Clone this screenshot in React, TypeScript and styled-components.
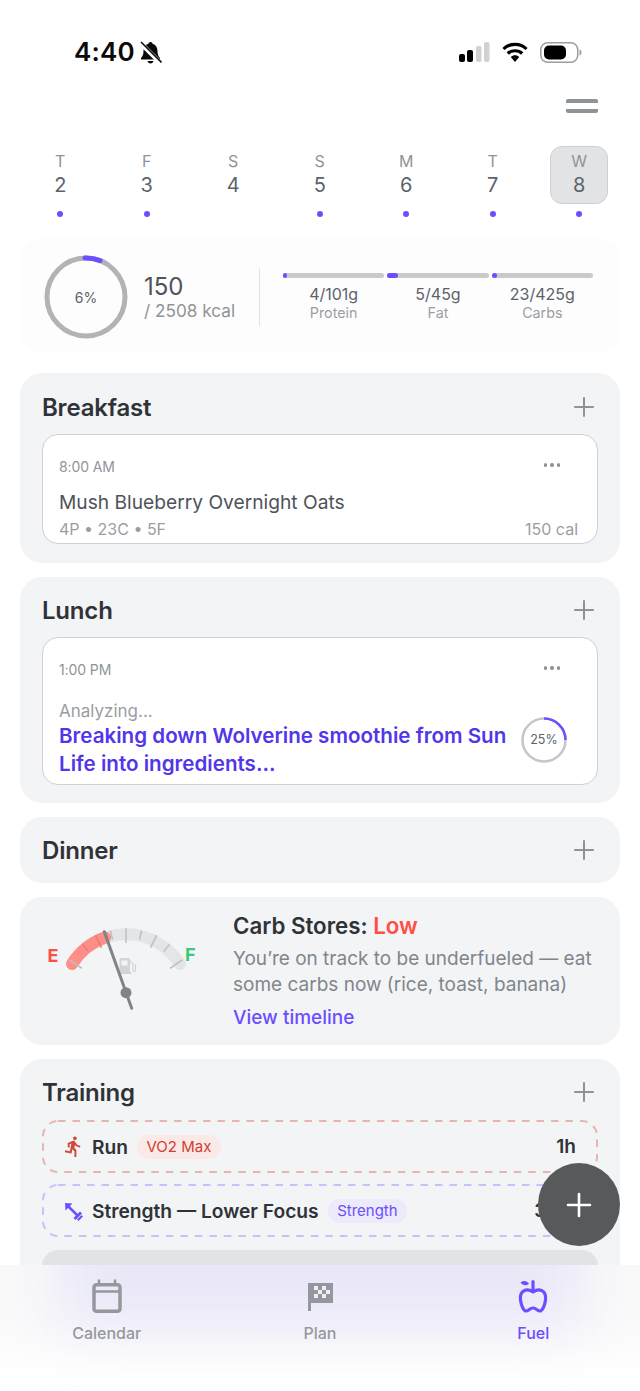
import React from "react";
import styled, { createGlobalStyle } from "styled-components";
import { MdDirectionsRun } from "react-icons/md";

const Global = createGlobalStyle`
  html, body { margin: 0; padding: 0; background: #fff; }
  body { font-family: Inter, "Liberation Sans", sans-serif; -webkit-font-smoothing: antialiased; }
  * { box-sizing: border-box; }
`;

const Screen = styled.div`
  position: relative;
  width: 640px;
  height: 1391px;
  overflow: hidden;
  background: #fff;
`;
const StatusBar = styled.div`
  height: 90px;
  padding: 34px 57px 0 74px;
  display: flex;
  justify-content: space-between;
  align-items: flex-start;
`;
const Clock = styled.div`
  display: flex;
  align-items: center;
  gap: 4px;
  font-size: 26px;
  line-height: 36px;
  font-weight: 600;
  color: #0a0a0a;
  letter-spacing: 0.2px;
`;
const StatusIcons = styled.div`
  display: flex;
  align-items: center;
  gap: 12px;
  height: 36px;
`;
const MenuRow = styled.div`
  height: 30px;
  padding: 9px 42px 0 0;
  display: flex;
  justify-content: flex-end;
`;
const MenuButton = styled.div`
  width: 32px;
  height: 14px;
  border-top: 4px solid #8e9397;
  border-bottom: 4px solid #8e9397;
  border-radius: 2px;
`;
const Week = styled.div`
  margin-top: 26px;
  padding-left: 17px;
  display: flex;
`;
const Day = styled.div`
  width: 86.5px;
  flex: none;
  display: flex;
  flex-direction: column;
  align-items: center;
`;
const DayBox = styled.div<{ $active?: boolean }>`
  width: 58px;
  height: 58px;
  display: flex;
  flex-direction: column;
  align-items: center;
  padding-top: 5px;
  border-radius: 12px;
  background: ${(p) => (p.$active ? "#e2e3e5" : "transparent")};
  border: 1px solid ${(p) => (p.$active ? "#ced0d3" : "transparent")};
`;
const DayLetter = styled.div`
  font-size: 16px;
  line-height: 18px;
  color: #8f9498;
`;
const DayNumber = styled.div`
  margin-top: 2px;
  font-size: 20px;
  line-height: 26px;
  color: #5c636a;
`;
const Dot = styled.div<{ $off?: boolean }>`
  margin-top: 7px;
  width: 6px;
  height: 6px;
  border-radius: 50%;
  background: ${(p) => (p.$off ? "transparent" : "#6b4eff")};
`;
const Stack = styled.div`
  margin-top: 21px;
  padding: 0 20px;
  display: flex;
  flex-direction: column;
  gap: 14px;
`;
const SummaryCard = styled.div`
  height: 114px;
  margin-bottom: 7px;
  border-radius: 20px;
  background: #fdfdfe;
  padding: 0 27px 0 24px;
  display: flex;
  align-items: center;
`;
const Ring = styled.div`
  position: relative;
  width: 84px;
  height: 84px;
  margin-top: 4px;
  flex: none;
  display: flex;
  align-items: center;
  justify-content: center;
  font-size: 14px;
  color: #5c636a;
`;
const RingSvg = styled.svg`
  position: absolute;
  inset: 0;
`;
const Kcal = styled.div`
  margin-left: 16px;
  margin-top: 8px;
  width: 115px;
  flex: none;
`;
const KcalValue = styled.div`
  font-size: 24px;
  line-height: 24px;
  color: #4d535a;
`;
const KcalGoal = styled.div`
  font-size: 17.2px;
  line-height: 24px;
  color: #8f9498;
  white-space: nowrap;
`;
const Divider = styled.div`
  width: 1px;
  height: 58px;
  margin-top: 3px;
  background: #e2e3e5;
  flex: none;
`;
const Macros = styled.div`
  flex: 1;
  margin-left: 23px;
  margin-top: 4px;
  display: grid;
  grid-template-columns: repeat(3, 1fr);
  gap: 3px;
`;
const Macro = styled.div`
  display: flex;
  flex-direction: column;
  align-items: center;
  min-width: 0;
`;
const Track = styled.div`
  position: relative;
  align-self: stretch;
  height: 5px;
  border-radius: 3px;
  background: #c9cacc;
  margin-bottom: 6px;
`;
const Fill = styled.div`
  position: absolute;
  left: 0;
  top: 0;
  bottom: 0;
  border-radius: 3px;
  background: #6b4eff;
`;
const MacroValue = styled.div`
  font-size: 16px;
  line-height: 20px;
  color: #5c636a;
  white-space: nowrap;
`;
const MacroLabel = styled.div`
  font-size: 14.3px;
  line-height: 18px;
  color: #9a9ea3;
`;
const Panel = styled.div<{ $h: number }>`
  height: ${(p) => p.$h}px;
  flex: none;
  border-radius: 22px;
  background: #f3f4f6;
  padding: 0 22px;
`;
const PanelHeader = styled.div<{ $h?: number; $pad?: number }>`
  height: ${(p) => p.$h ?? 61}px;
  padding-top: ${(p) => p.$pad ?? 5}px;
  display: flex;
  align-items: center;
  justify-content: space-between;
`;
const PanelTitle = styled.div`
  font-size: 24px;
  font-weight: 600;
  color: #2f3337;
  letter-spacing: -0.2px;
`;
const AddIcon = styled.svg`
  width: 20px;
  height: 20px;
  margin-right: 4px;
  stroke: #8e9397;
  stroke-width: 2;
  stroke-linecap: round;
  fill: none;
`;
const MealCard = styled.div<{ $h: number }>`
  height: ${(p) => p.$h}px;
  background: #fff;
  border: 1px solid #cfd1d4;
  border-radius: 16px;
  padding: 0 19px 0 16px;
  overflow: hidden;
`;
const MealTop = styled.div`
  height: 62px;
  display: flex;
  align-items: center;
  justify-content: space-between;
  padding-right: 18px;
`;
const MealTime = styled.div`
  font-size: 14px;
  color: #8f9498;
  letter-spacing: -0.1px;
`;
const More = styled.div`
  display: flex;
  gap: 3px;
  margin-top: -2px;
`;
const MoreDot = styled.span`
  width: 3.5px;
  height: 3.5px;
  border-radius: 50%;
  background: #8e9397;
`;
const MealName = styled.div`
  margin-top: -8px;
  font-size: 19.2px;
  line-height: 26px;
  color: #4d535a;
`;
const MealFoot = styled.div`
  margin-top: 3px;
  display: flex;
  justify-content: space-between;
  font-size: 16px;
  line-height: 22px;
  color: #9a9ea3;
`;
const AnalyzeRow = styled.div`
  display: flex;
  align-items: center;
  justify-content: space-between;
  padding-right: 11px;
`;
const AnalyzeLabel = styled.div`
  margin-top: -1px;
  font-size: 17px;
  line-height: 24px;
  color: #9a9ea3;
`;
const AnalyzeText = styled.div`
  width: 462px;
  font-size: 20.6px;
  line-height: 28px;
  font-weight: 600;
  color: #5236ea;
  margin-top: -1px;
`;
const MiniRing = styled.div`
  position: relative;
  width: 46px;
  height: 46px;
  margin-top: -22px;
  flex: none;
  display: flex;
  align-items: center;
  justify-content: center;
  font-size: 12.5px;
  color: #5c636a;
`;
const CarbCard = styled.div`
  height: 148px;
  border-radius: 22px;
  background: #f3f4f6;
  padding: 0 22px 0 24px;
  display: flex;
  align-items: center;
`;
const Gauge = styled.svg`
  width: 160px;
  height: 100px;
  flex: none;
  margin-right: 29px;
  margin-top: -1px;
`;
const CarbTitle = styled.div`
  font-size: 22.3px;
  line-height: 30px;
  font-weight: 600;
  color: #2f3337;
`;
const Low = styled.span`
  color: #ff4f45;
`;
const CarbText = styled.div`
  margin-top: 5px;
  font-size: 19px;
  line-height: 26px;
  color: #80868b;
  white-space: nowrap;
`;
const CarbLink = styled.div`
  margin-top: 7px;
  font-size: 19px;
  line-height: 26px;
  font-weight: 500;
  color: #6b4eff;
`;
const TrainingRow = styled.div`
  position: relative;
  height: 53px;
  margin-bottom: 11px;
  display: flex;
  align-items: center;
  padding: 0 22px 0 20px;
`;
const DashFrame = styled.svg`
  position: absolute;
  left: 0;
  top: 0;
`;
const TrainingIcon = styled.div<{ $color: string }>`
  width: 24px;
  height: 20px;
  margin-left: -1px;
  display: flex;
  align-items: center;
  justify-content: center;
  color: ${(p) => p.$color};
  flex: none;
  margin-right: 7px;
`;
const TrainingName = styled.div`
  font-size: 19.2px;
  font-weight: 600;
  color: #2f3337;
`;
const Tag = styled.div<{ $bg: string; $fg: string }>`
  margin-left: 9px;
  height: 24px;
  padding: 0 9.5px;
  border-radius: 12px;
  display: flex;
  align-items: center;
  background: ${(p) => p.$bg};
  color: ${(p) => p.$fg};
  font-size: 15px;
`;
const Duration = styled.div`
  margin-left: auto;
  font-size: 19px;
  font-weight: 600;
  color: #2f3337;
`;
const GreyBlock = styled.div`
  height: 80px;
  margin-top: 13px;
  border-radius: 16px;
  background: #e2e3e5;
`;
const Fab = styled.div`
  position: absolute;
  left: 538px;
  top: 1163px;
  width: 82px;
  height: 83px;
  border-radius: 50%;
  background: #58595b;
  display: flex;
  align-items: center;
  justify-content: center;
`;
const FabIcon = styled.svg`
  width: 26px;
  height: 26px;
  stroke: #fff;
  stroke-width: 2.6;
  stroke-linecap: round;
`;
const TabBar = styled.div`
  position: absolute;
  left: 0;
  right: 0;
  top: 1265px;
  bottom: 0;
  overflow: hidden;
  display: grid;
  grid-template-columns: repeat(3, 1fr);
  background: linear-gradient(to bottom, #f9f9fa 0%, #fafafb 45%, #ffffff 90%);
  &::before {
    content: "";
    position: absolute;
    left: 60px;
    right: 60px;
    top: -50px;
    height: 115px;
    background: #e9e7f8;
    filter: blur(28px);
  }
`;
const Tab = styled.div<{ $active?: boolean }>`
  position: relative;
  display: flex;
  flex-direction: column;
  align-items: center;
  padding-top: 14px;
  color: ${(p) => (p.$active ? "#6b4eff" : "#94989c")};
`;
const TabIcon = styled.svg`
  width: 38px;
  height: 38px;
`;
const TabLabel = styled.div`
  margin-top: 6px;
  font-size: 16px;
  line-height: 20px;
  font-weight: 500;
`;

const days = [
  ["T", "2", true], ["F", "3", true], ["S", "4", false], ["S", "5", true],
  ["M", "6", true], ["T", "7", true], ["W", "8", true],
] as const;

const Plus = () => (
  <AddIcon viewBox="0 0 20 20">
    <path d="M10 1v18M1 10h18" />
  </AddIcon>
);
const Dots = () => (
  <More>
    <MoreDot />
    <MoreDot />
    <MoreDot />
  </More>
);
const Dash = ({ color }: { color: string }) => (
  <DashFrame width="556" height="53" viewBox="0 0 556 53" fill="none">
    <rect x="1" y="1" width="554" height="51" rx="15" stroke={color} strokeWidth="2" strokeDasharray="7.5 7" />
  </DashFrame>
);

const CX = 82;
const CY = 77;
const polar = (r: number, deg: number) => {
  const a = (deg * Math.PI) / 180;
  return [CX + r * Math.sin(a), CY - r * Math.cos(a)];
};
const ticks: [number, number, number][] = [
  [-56, 53, 68], [-39, 60, 69], [-26, 56, 70], [-13, 60, 69], [0, 55, 70],
  [13, 60, 69], [26, 56, 70], [39, 60, 69], [56, 53, 68],
];

export default function App() {
  return (
    <Screen>
      <Global />
      <StatusBar>
        <Clock>
          4:40
          <svg width="23" height="23" viewBox="0 0 23 23">
            <path d="M11.500 1c1.200 0 2 .8 2 1.800 3.500 1 5 4 5 7.700 0 3 1 5 2.500 6.500v1.500H2V17c1.500-1.500 2.500-3.500 2.500-6.500 0-3.700 1.500-6.700 5-7.700 0-1 .8-1.800 2-1.800z" fill="#0a0a0a" />
            <path d="M8.500 20h6c-.3 1.500-1.500 2.500-3 2.500s-2.700-1-3-2.500z" fill="#0a0a0a" />
            <path d="M1 1.500L21.500 22" stroke="#fff" strokeWidth="4.500" />
            <path d="M2 1L22.500 21.500" stroke="#0a0a0a" strokeWidth="1.600" />
          </svg>
        </Clock>
        <StatusIcons>
          <svg width="31" height="20" viewBox="0 0 31 20">
            <rect x="0" y="12" width="6" height="8" rx="2" fill="#000" />
            <rect x="8" y="8" width="6" height="12" rx="2" fill="#000" />
            <rect x="17" y="4" width="5.500" height="16" rx="2" fill="#cfd1d3" />
            <rect x="25" y="0" width="5.500" height="20" rx="2" fill="#cfd1d3" />
          </svg>
          <svg width="26" height="20" viewBox="0 0 26 20">
            <path d="M1.500 7C7.500 0.800 18.500 0.800 24.500 7" fill="none" stroke="#000" strokeWidth="3.200" />
            <path d="M5.800 11.500C9.500 7.800 16.500 7.800 20.200 11.500" fill="none" stroke="#000" strokeWidth="3.200" />
            <path d="M8.800 15c2.500-2.200 5.900-2.200 8.400 0L13 20z" fill="#000" />
          </svg>
          <svg width="43" height="21" viewBox="0 0 43 21">
            <rect x="0.750" y="0.750" width="37" height="19.500" rx="7" fill="none" stroke="#9a9ea3" strokeWidth="1.500" />
            <rect x="4" y="3.500" width="22" height="14" rx="5" fill="#000" />
            <path d="M39.500 7.500c1.500.5 2 1.800 2 3s-.5 2.500-2 3z" fill="#9a9ea3" />
          </svg>
        </StatusIcons>
      </StatusBar>
      <MenuRow>
        <MenuButton />
      </MenuRow>
      <Week>
        {days.map(([l, n, dot], i) => (
          <Day key={i}>
            <DayBox $active={i === 6}>
              <DayLetter>{l}</DayLetter>
              <DayNumber>{n}</DayNumber>
            </DayBox>
            <Dot $off={!dot} />
          </Day>
        ))}
      </Week>
      <Stack>
        <SummaryCard>
          <Ring>
            <RingSvg width="84" height="84" viewBox="0 0 84 84">
              <circle cx="42" cy="42" r="39" fill="none" stroke="#b1b3b5" strokeWidth="5" />
              <path d="M41 3A39 39 0 0 1 56 5.600" fill="none" stroke="#6b4eff" strokeWidth="5" strokeLinecap="round" />
            </RingSvg>
            6%
          </Ring>
          <Kcal>
            <KcalValue>150</KcalValue>
            <KcalGoal>/ 2508 kcal</KcalGoal>
          </Kcal>
          <Divider />
          <Macros>
            {[
              ["4/101g", "Protein", 4],
              ["5/45g", "Fat", 11],
              ["23/425g", "Carbs", 5],
            ].map(([v, l, w]) => (
              <Macro key={l as string}>
                <Track>
                  <Fill style={{ width: w as number }} />
                </Track>
                <MacroValue>{v}</MacroValue>
                <MacroLabel>{l}</MacroLabel>
              </Macro>
            ))}
          </Macros>
        </SummaryCard>

        <Panel $h={190}>
          <PanelHeader $pad={7}>
            <PanelTitle>Breakfast</PanelTitle>
            <Plus />
          </PanelHeader>
          <MealCard $h={110}>
            <MealTop>
              <MealTime>8:00 AM</MealTime>
              <Dots />
            </MealTop>
            <MealName>Mush Blueberry Overnight Oats</MealName>
            <MealFoot>
              <span>4P • 23C • 5F</span>
              <span>150 cal</span>
            </MealFoot>
          </MealCard>
        </Panel>

        <Panel $h={226}>
          <PanelHeader $h={60} $pad={6}>
            <PanelTitle>Lunch</PanelTitle>
            <Plus />
          </PanelHeader>
          <MealCard $h={148}>
            <MealTop>
              <MealTime>1:00 PM</MealTime>
              <Dots />
            </MealTop>
            <AnalyzeLabel>Analyzing...</AnalyzeLabel>
            <AnalyzeRow>
              <AnalyzeText>Breaking down Wolverine smoothie from Sun Life into ingredients...</AnalyzeText>
              <MiniRing>
                <RingSvg width="46" height="46" viewBox="0 0 46 46">
                  <circle cx="23" cy="23" r="21.500" fill="none" stroke="#c4c6c9" strokeWidth="2.500" />
                  <path d="M23 1.500A21.500 21.500 0 0 1 44.500 23" fill="none" stroke="#6b4eff" strokeWidth="2.500" />
                </RingSvg>
                25%
              </MiniRing>
            </AnalyzeRow>
          </MealCard>
        </Panel>

        <Panel $h={66}>
          <PanelHeader $h={66} $pad={0}>
            <PanelTitle>Dinner</PanelTitle>
            <Plus />
          </PanelHeader>
        </Panel>

        <CarbCard>
          <Gauge viewBox="0 0 160 100">
            <path d="M28 43A64 64 0 0 1 136 43" fill="none" stroke="#e4e5e7" strokeWidth="12" strokeLinecap="round" />
            <path d="M28 43A64 64 0 0 1 61 16.500" fill="none" stroke="#fe8f88" strokeWidth="12" strokeLinecap="round" />
            {ticks.map(([d, r1, r2]) => {
              const [x1, y1] = polar(r1, d);
              const [x2, y2] = polar(r2, d);
              return (
                <line
                  key={d}
                  x1={x1}
                  y1={y1}
                  x2={x2}
                  y2={y2}
                  stroke={d === -39 || d === -26 ? "#e27d76" : "#bcbec1"}
                  strokeWidth="1.500"
                />
              );
            })}
            <text x="3.500" y="41" fontFamily="Inter" fontSize="18" fontWeight="700" fill="#ff4f45">E</text>
            <text x="141" y="40" fontFamily="Inter" fontSize="18" fontWeight="700" fill="#3cc878">F</text>
            <path
              fillRule="evenodd"
              d="M76.500 37h8a1.500 1.500 0 0 1 1.500 1.500V51h1.500v2h-13v-2h1V38.500a1.500 1.500 0 0 1 1.500-1.500zm1 2.500v5h6v-5z"
              fill="#d2d4d6"
            />
            <path d="M86 40l3 3v6c0 2 2.500 2 2.500 0v-6" fill="none" stroke="#d2d4d6" strokeWidth="1.300" />
            <line x1="60.300" y1="10.700" x2="87.700" y2="87.300" stroke="#7f8488" strokeWidth="3" strokeLinecap="round" />
            <circle cx="82" cy="71.700" r="5.500" fill="#7f8488" />
          </Gauge>
          <div>
            <CarbTitle>
              Carb Stores: <Low>Low</Low>
            </CarbTitle>
            <CarbText>
              You’re on track to be underfueled — eat
              <br />
              some carbs now (rice, toast, banana)
            </CarbText>
            <CarbLink>View timeline</CarbLink>
          </div>
        </CarbCard>

        <Panel $h={400}>
          <PanelHeader>
            <PanelTitle>Training</PanelTitle>
            <Plus />
          </PanelHeader>
          <TrainingRow>
            <Dash color="#e8b4ae" />
            <TrainingIcon $color="#cf4a3c">
              <MdDirectionsRun size={23} />
            </TrainingIcon>
            <TrainingName>Run</TrainingName>
            <Tag $bg="#fbe9e7" $fg="#cf3f30">VO2 Max</Tag>
            <Duration>1h</Duration>
          </TrainingRow>
          <TrainingRow>
            <Dash color="#c9bffa" />
            <TrainingIcon $color="#6b4eff">
              <svg width="20" height="20" viewBox="0 0 20 20" fill="currentColor">
                <path d="M5 5L15 15" stroke="currentColor" strokeWidth="2.500" fill="none" />
                <path d="M2 2l7.500.5L2.500 9.500z" />
                <path d="M10.500 17l6.500-6.500 2 2-6.500 6.500z" />
                <path d="M14 18.500l4.500-4.500 1.500 1.500-4.500 4.500z" />
              </svg>
            </TrainingIcon>
            <TrainingName>Strength — Lower Focus</TrainingName>
            <Tag $bg="#eceafb" $fg="#6b4eff">Strength</Tag>
            <Duration>30m</Duration>
          </TrainingRow>
          <GreyBlock />
        </Panel>
      </Stack>

      <TabBar>
        <Tab>
          <TabIcon viewBox="0 0 38 38" fill="none" stroke="currentColor" strokeWidth="3.500">
            <rect x="6" y="5.750" width="26" height="26.500" rx="2.500" />
            <path d="M6 12.500h26" strokeWidth="2.500" />
            <path d="M11 0.500v5M27 0.500v5" strokeWidth="2.500" />
          </TabIcon>
          <TabLabel>Calendar</TabLabel>
        </Tab>
        <Tab>
          <TabIcon viewBox="0 0 38 38">
            <path d="M7 4h25v20H10v8H7z" fill="currentColor" />
            <path d="M13 7h4v4h-4zM21 7h4v4h-4zM17 11h4v4h-4zM25 11h4v4h-4zM13 15h4v4h-4zM21 15h4v4h-4z" fill="#eeeef6" />
          </TabIcon>
          <TabLabel>Plan</TabLabel>
        </Tab>
        <Tab $active>
          <TabIcon viewBox="0 0 38 38" fill="none" stroke="currentColor" strokeWidth="3.200" strokeLinecap="round" strokeLinejoin="round">
            <path d="M19 13c-3-2-6-2.500-8.500-1.500C7 13 6 17 6.500 21c.5 4 2.500 10.500 5.500 11 2.500.3 3.500-3 7-3s4.500 3.300 7 3c3-.5 5-7 5.500-11 .5-4-.5-8-4-9.500C25 10.500 22 11 19 13z" />
            <path d="M19 11.500V2.500" />
            <path d="M6.500 3.500C9 1 13 1.500 15 4.500 13 7 9 7 6.500 3.500z" fill="currentColor" stroke="none" />
          </TabIcon>
          <TabLabel>Fuel</TabLabel>
        </Tab>
      </TabBar>
      <Fab>
        <FabIcon viewBox="0 0 26 26">
          <path d="M13 2v22M2 13h22" />
        </FabIcon>
      </Fab>
    </Screen>
  );
}
